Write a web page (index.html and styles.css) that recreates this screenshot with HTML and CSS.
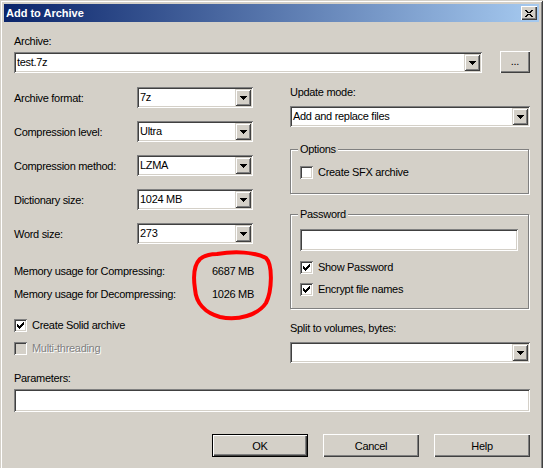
FILE: index.html
```html
<!DOCTYPE html>
<html lang="en">
<head>
  <meta charset="UTF-8" />
  <meta name="viewport" content="width=device-width, initial-scale=1.0" />
  <title>Add to Archive</title>
  <link rel="stylesheet" href="styles.css">
</head>
<body>
  <div class="window">
    <div class="titlebar">
      <span class="title">Add to Archive</span>
      <span class="caption-btn">
        <svg width="8" height="7" viewBox="0 0 8 7"><path d="M0 0h2v1h1v1h1v1h1v1h1v1h1v1h1v1h-2v-1h-1v-1h-1v-1h-1v-1h-1v-1h-1v-1h-1z M8 0h-2v1h-1v1h-1v1h-1v1h-1v1h-1v1h-1v1h2v-1h1v-1h1v-1h1v-1h1v-1h1v-1h1z"/></svg>
      </span>
    </div>

    <div class="content">
      <div class="label">Archive:</div>
      <div class="archive-row">
        <div class="combo archive-combo">
          <span class="combo-value">test.7z</span>
          <span class="drop-btn"><svg width="7" height="4" viewBox="0 0 7 4"><path d="M0 0h7v1h-1v1h-1v1h-1v1h-1v-1h-1v-1h-1v-1h-1z"/></svg></span>
        </div>
        <div class="btn browse-btn">...</div>
      </div>

      <div class="columns">
        <div class="col-left">
          <div class="field">
            <span class="field-label">Archive format:</span>
            <div class="combo small-combo">
              <span class="combo-value">7z</span>
              <span class="drop-btn"><svg width="7" height="4" viewBox="0 0 7 4"><path d="M0 0h7v1h-1v1h-1v1h-1v1h-1v-1h-1v-1h-1v-1h-1z"/></svg></span>
            </div>
          </div>
          <div class="field">
            <span class="field-label">Compression level:</span>
            <div class="combo small-combo">
              <span class="combo-value">Ultra</span>
              <span class="drop-btn"><svg width="7" height="4" viewBox="0 0 7 4"><path d="M0 0h7v1h-1v1h-1v1h-1v1h-1v-1h-1v-1h-1v-1h-1z"/></svg></span>
            </div>
          </div>
          <div class="field">
            <span class="field-label">Compression method:</span>
            <div class="combo small-combo">
              <span class="combo-value">LZMA</span>
              <span class="drop-btn"><svg width="7" height="4" viewBox="0 0 7 4"><path d="M0 0h7v1h-1v1h-1v1h-1v1h-1v-1h-1v-1h-1v-1h-1z"/></svg></span>
            </div>
          </div>
          <div class="field">
            <span class="field-label">Dictionary size:</span>
            <div class="combo small-combo">
              <span class="combo-value">1024 MB</span>
              <span class="drop-btn"><svg width="7" height="4" viewBox="0 0 7 4"><path d="M0 0h7v1h-1v1h-1v1h-1v1h-1v-1h-1v-1h-1v-1h-1z"/></svg></span>
            </div>
          </div>
          <div class="field">
            <span class="field-label">Word size:</span>
            <div class="combo small-combo">
              <span class="combo-value">273</span>
              <span class="drop-btn"><svg width="7" height="4" viewBox="0 0 7 4"><path d="M0 0h7v1h-1v1h-1v1h-1v1h-1v-1h-1v-1h-1v-1h-1z"/></svg></span>
            </div>
          </div>

          <div class="memory">
            <div class="mem-row"><span class="mem-label">Memory usage for Compressing:</span><span>6687 MB</span></div>
            <div class="mem-row"><span class="mem-label">Memory usage for Decompressing:</span><span>1026 MB</span></div>
          </div>

          <div class="checks">
            <div class="check-row">
              <span class="checkbox"><svg width="7" height="7" viewBox="0 0 7 7"><path d="M0 2h1v1h1v1h1v-1h1v-1h1v-1h1v-1h1v3h-1v1h-1v1h-1v1h-1v1h-1v-1h-1v-1h-1v-1z"/></svg></span>
              <span>Create Solid archive</span>
            </div>
            <div class="check-row disabled">
              <span class="checkbox"></span>
              <span>Multi-threading</span>
            </div>
          </div>
        </div>

        <div class="col-right">
          <div class="label">Update mode:</div>
          <div class="combo wide-combo">
            <span class="combo-value">Add and replace files</span>
            <span class="drop-btn"><svg width="7" height="4" viewBox="0 0 7 4"><path d="M0 0h7v1h-1v1h-1v1h-1v1h-1v-1h-1v-1h-1v-1h-1z"/></svg></span>
          </div>

          <div class="group options-group">
            <span class="group-title">Options</span>
            <div class="check-row">
              <span class="checkbox"></span>
              <span>Create SFX archive</span>
            </div>
          </div>

          <div class="group password-group">
            <span class="group-title">Password</span>
            <div class="textbox password-box"></div>
            <div class="check-row">
              <span class="checkbox"><svg width="7" height="7" viewBox="0 0 7 7"><path d="M0 2h1v1h1v1h1v-1h1v-1h1v-1h1v-1h1v3h-1v1h-1v1h-1v1h-1v1h-1v-1h-1v-1h-1v-1z"/></svg></span>
              <span>Show Password</span>
            </div>
            <div class="check-row">
              <span class="checkbox"><svg width="7" height="7" viewBox="0 0 7 7"><path d="M0 2h1v1h1v1h1v-1h1v-1h1v-1h1v-1h1v3h-1v1h-1v1h-1v1h-1v1h-1v-1h-1v-1h-1v-1z"/></svg></span>
              <span>Encrypt file names</span>
            </div>
          </div>

          <div class="label split-label">Split to volumes, bytes:</div>
          <div class="combo wide-combo">
            <span class="combo-value"></span>
            <span class="drop-btn"><svg width="7" height="4" viewBox="0 0 7 4"><path d="M0 0h7v1h-1v1h-1v1h-1v1h-1v-1h-1v-1h-1v-1h-1z"/></svg></span>
          </div>
        </div>
      </div>

      <div class="label params-label">Parameters:</div>
      <div class="textbox params-box"></div>

      <div class="buttons">
        <div class="btn default-btn">OK</div>
        <div class="btn">Cancel</div>
        <div class="btn">Help</div>
      </div>
    </div>

    <!-- marker ring drawn over the memory figures -->
    <svg class="marker" width="90" height="78" viewBox="189 247 90 78">
      <path d="M217 254 C235 251 255 252 266 258 C273 265 272 291 266 303 C258 315 238 321 220 317 C205 313 196 303 195 289 C193 276 194 265 200 259 C205 255 211 254 217 254 Z"/>
    </svg>
  </div>
</body>
</html>
```

FILE: styles.css
```css
* { box-sizing: border-box; }
body {
  margin: 0;
  padding: 0;
  background: #d4d0c8;
  font-family: "Liberation Sans", Arial, sans-serif;
  font-size: 11px;
  letter-spacing: -0.3px;
  color: #000;
  overflow: hidden;
}
.window {
  position: relative;
  width: 543px;
  height: 480px;
  padding: 4px;
  background: #d4d0c8;
  box-shadow: inset 1px 1px #d4d0c8, inset -1px -1px #404040,
              inset 2px 2px #fff, inset -2px -2px #808080;
}
.titlebar {
  height: 18px;
  display: flex;
  align-items: center;
  justify-content: space-between;
  padding: 0 2px 0 2px;
  background: linear-gradient(to right, #0a246a, #a6caf0);
}
.title {
  color: #fff;
  font-weight: bold;
  letter-spacing: 0;
}
.caption-btn {
  width: 16px; height: 14px;
  display: flex; align-items: center; justify-content: center;
  background: #d4d0c8;
  box-shadow: inset 1px 1px #fff, inset -1px -1px #404040,
              inset -2px -2px #808080;
}
.content { padding: 13px 9px 0 10px; }
.label { height: 13px; line-height: 13px; white-space: nowrap; }

/* sunken fields */
.combo, .textbox {
  background: #fff;
  box-shadow: inset 1px 1px #808080, inset -1px -1px #fff,
              inset 2px 2px #404040, inset -2px -2px #d4d0c8;
}
.combo {
  display: flex;
  height: 21px;
  padding: 2px;
}
.combo-value {
  flex: 1;
  padding-left: 1px;
  line-height: 17px;
  white-space: nowrap;
  overflow: hidden;
}
.drop-btn {
  width: 16px;
  display: flex; align-items: center; justify-content: center;
  background: #d4d0c8;
  box-shadow: inset 1px 1px #d4d0c8, inset -1px -1px #404040,
              inset 2px 2px #fff, inset -2px -2px #808080;
}
.drop-btn svg { margin-top: 1px; }

/* push buttons */
.btn {
  display: flex; align-items: center; justify-content: center;
  background: #d4d0c8;
  box-shadow: inset 1px 1px #fff, inset -1px -1px #404040,
              inset -2px -2px #808080;
}
.default-btn {
  box-shadow: inset 0 0 0 1px #000, inset 2px 2px #fff,
              inset -2px -2px #404040, inset -3px -3px #808080;
}

.archive-row {
  display: flex;
  align-items: flex-end;
  gap: 18px;
  margin-top: 3px;
  height: 22px;
}
.archive-combo { width: 468px; }
.browse-btn { width: 30px; height: 22px; padding-bottom: 2px; }

.columns { display: flex; margin-top: 13px; }
.col-left { width: 276px; padding-top: 1px; }
.col-right { width: 240px; }

.field {
  display: flex;
  align-items: center;
  height: 21px;
  margin-bottom: 13px;
}
.field-label { width: 123px; white-space: nowrap; }
.small-combo { width: 116px; }

.memory { margin-top: 21px; }
.mem-row { display: flex; height: 13px; line-height: 13px; margin-bottom: 10px; }
.mem-label { width: 198px; white-space: nowrap; }

.checks { margin-top: 18px; }
.check-row {
  display: flex;
  align-items: center;
  gap: 5px;
  height: 13px;
  line-height: 13px;
  white-space: nowrap;
}
.checks .check-row + .check-row { margin-top: 10px; }
.checkbox {
  width: 13px; height: 13px;
  flex: none;
  padding: 3px;
  background: #fff;
  box-shadow: inset 1px 1px #808080, inset -1px -1px #fff,
              inset 2px 2px #404040, inset -2px -2px #d4d0c8;
}
.checkbox svg { display: block; }
.disabled { color: #808080; text-shadow: 1px 1px #fff; }
.disabled .checkbox { background: #d4d0c8; }

.wide-combo { width: 240px; margin-top: 7px; }

/* etched group frames */
.group {
  border: 1px solid #808080;
  box-shadow: inset 1px 1px #fff, 1px 1px #fff;
  padding: 0 0 0 9px;
}
.group-title {
  display: table;
  margin: -7px 0 0 -2px;
  padding: 0 2px;
  height: 13px;
  line-height: 13px;
  background: #d4d0c8;
}
.options-group { margin-top: 22px; height: 45px; width: 239px; }
.options-group .check-row { margin-top: 10px; }
.password-group { margin-top: 20px; height: 95px; width: 239px; }
.password-box { width: 218px; height: 22px; margin-top: 8px; }
.password-group .check-row { margin-top: 10px; }
.password-group .check-row + .check-row { margin-top: 9px; }
.split-label { margin-top: 13px; }

.params-label { margin-top: 9px; }
.params-box { height: 23px; margin-top: 4px; }

.buttons {
  display: flex;
  justify-content: flex-end;
  gap: 15px;
  margin-top: 22px;
}
.buttons .btn { width: 96px; height: 23px; }

.marker {
  position: absolute;
  left: 189px;
  top: 247px;
}
.marker path {
  fill: none;
  stroke: #f00;
  stroke-width: 4;
}
```
